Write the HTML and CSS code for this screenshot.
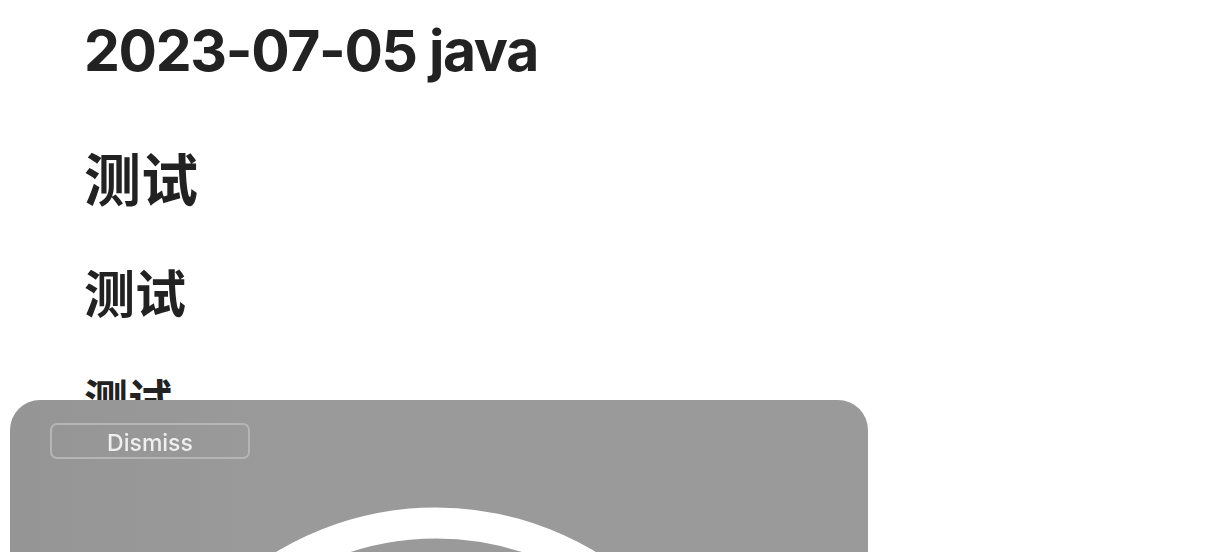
FILE: index.html
```html
<!DOCTYPE html>
<html lang="zh">
<head>
<meta charset="utf-8">
<title>2023-07-05 java</title>
<link rel="stylesheet" href="styles.css">
</head>
<body>
<main class="article">
  <h1 class="title">2023-07-05 java</h1>
  <h1 class="h1">测试</h1>
  <h2 class="h2">测试</h2>
  <h3 class="h3">测试</h3>
</main>
<div class="sheet">
  <button class="dismiss" type="button">Dismiss</button>
  <div class="spinner">
    <svg width="640" height="640" viewBox="0 0 640 640">
      <circle cx="320" cy="320" r="294" fill="none" stroke="#ffffff" stroke-width="31"/>
    </svg>
  </div>
</div>
</body>
</html>
```
FILE: styles.css
```css
html, body {
  margin: 0;
  padding: 0;
  background: #ffffff;
  overflow: hidden;
}
body {
  font-family: Inter, "Noto Sans CJK SC", sans-serif;
  color: #222222;
}
.article {
  padding-left: 84px;
  display: flex;
  flex-direction: column;
}
.title {
  font-size: 57px;
  line-height: 70px;
  font-weight: 700;
  letter-spacing: -1.3px;
  margin: 16px 0 0;
}
.h1 {
  font-size: 57px;
  line-height: 72px;
  font-weight: 700;
  margin: 59px 0 0;
}
.h2 {
  font-size: 51px;
  line-height: 62px;
  font-weight: 700;
  margin: 47px 0 0;
}
.h3 {
  font-size: 44px;
  line-height: 53px;
  font-weight: 700;
  margin: 49px 0 0;
}
.sheet {
  position: fixed;
  left: 10px;
  top: 400px;
  width: 858px;
  height: 700px;
  border-radius: 30px 30px 0 0;
  background: linear-gradient(90deg, #959595 0%, #9a9a9a 30%, #9a9a9a 100%);
  padding: 23px 0 0 40px;
  box-sizing: border-box;
  display: flex;
  flex-direction: column;
  align-items: flex-start;
  overflow: hidden;
}
.dismiss {
  flex-shrink: 0;
  width: 200px;
  height: 36px;
  border: 2px solid #b5b5b5;
  border-radius: 7px;
  background: transparent;
  color: #efefef;
  font-family: Inter, sans-serif;
  font-size: 23px;
  font-weight: 500;
  padding: 3px 0 0;
}
.spinner {
  flex-shrink: 0;
  align-self: stretch;
  margin-left: -40px;
  margin-top: 38px;
  display: flex;
  justify-content: center;
}
.spinner svg {
  display: block;
  flex-shrink: 0;
  margin-left: -6px;
}
```
